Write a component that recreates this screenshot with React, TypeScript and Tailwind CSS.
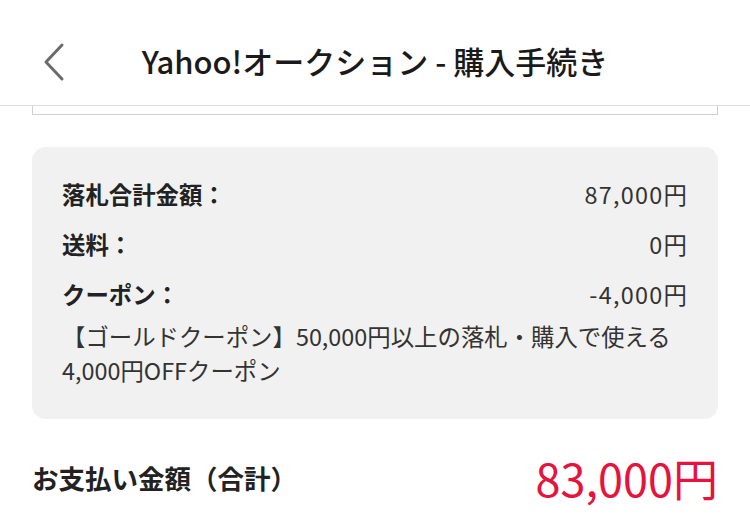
const font = { fontFamily: '"Noto Sans CJK JP", "Noto Sans", sans-serif' };

function BackIcon() {
  return (
    <svg width="24" height="40" viewBox="0 0 24 40" fill="none" aria-hidden="true">
      <polyline
        points="20,3 4,20 20,37"
        stroke="#6b6b6b"
        strokeWidth="3"
        strokeLinecap="round"
        strokeLinejoin="round"
      />
    </svg>
  );
}

function Row({ label, value }: { label: string; value: string }) {
  return (
    <div className="flex items-center justify-between leading-[50px]">
      <span className="font-bold text-[#222]">{label}</span>
      <span className="text-[#333] tracking-[1.3px] -mr-[1.3px]">{value}</span>
    </div>
  );
}

export default function App() {
  return (
    <div className="w-[750px] h-[515px] overflow-hidden bg-white" style={font}>
      <header className="relative flex h-[106px] items-center justify-center border-b border-[#dcdcdc] pt-[18px]">
        <button className="absolute left-[42px] top-[42px]" aria-label="戻る">
          <BackIcon />
        </button>
        <h1 className="text-[31px] font-medium text-[#1a1a1a]">
          Yahoo!オークション - 購入手続き
        </h1>
      </header>

      <div className="mx-[32px] h-[9px] border-x border-b border-[#cfcfcf]" />

      <section className="mx-[32px] mt-[32px] rounded-[14px] bg-[#f1f1f1] pl-[30px] pr-[31px] pt-[22px] pb-[32px] text-[23.4px]">
        <Row label="落札合計金額：" value="87,000円" />
        <Row label="送料：" value="0円" />
        <Row label="クーポン：" value="-4,000円" />
        <p className="leading-[34px] text-[#333]">
          【ゴールドクーポン】50,000円以上の落札・購入で使える
          <br />
          4,000円OFFクーポン
        </p>
      </section>

      <div className="mx-[32px] mt-[29px] flex h-[60px] items-center justify-between">
        <span className="text-[26.5px] font-bold text-[#222]">お支払い金額（合計）</span>
        <span className="text-[45px] leading-[60px] text-[#e5133d]">83,000円</span>
      </div>
    </div>
  );
}
